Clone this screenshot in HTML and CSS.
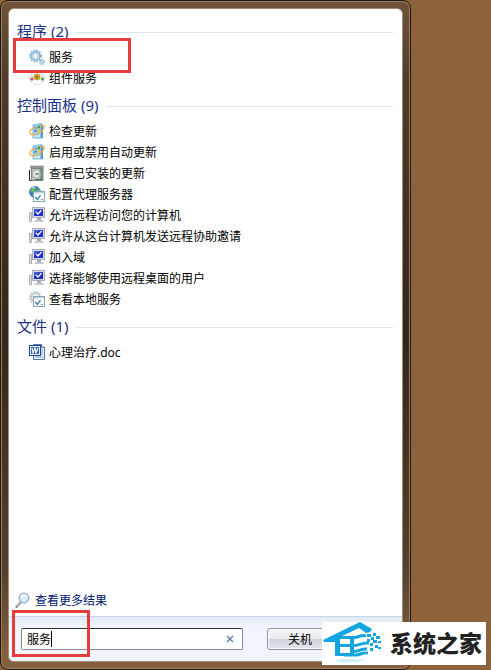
FILE: index.html
```html
<!DOCTYPE html>
<html lang="zh-CN">

<head>
    <meta charset="UTF-8">
    <meta name="viewport" content="width=device-width, initial-scale=1.0">
    <title>服务</title>
    <link rel="stylesheet" href="styles.css">
</head>

<body>
    <!-- Shared icons -->
    <svg class="sprite" aria-hidden="true">
        <symbol id="update" viewBox="0 0 16 16">
            <path d="M4 2l8-1.500V15H4z" fill="#9ad6f5" stroke="#62aedb" stroke-width=".8"/>
            <path d="M12 .5l2 1V15l-2 .5z" fill="#5d9cc8"/>
            <path d="M5.500 4l2-.5v2l-2 .5z" fill="#e8743a"/>
            <path d="M8.500 3l2.500-.5V5l-2.500.5z" fill="#3f9c43"/>
            <path d="M5.500 7l2-.5v2l-2 .5z" fill="#3c6fd0"/>
            <path d="M8.500 6.500L11 6v2.500l-2.500.5z" fill="#f2c32e"/>
            <path d="M11 3c3-1.500 5-.5 4 2s-5 5.500-9 6.500-5.500-1-5-3 2-3 3.500-3.500" fill="none" stroke="#f3a945" stroke-width="1.300"/>
            <path d="M5 12.500h6v1.500H5z" fill="#d9effa"/>
        </symbol>
        <symbol id="computer" viewBox="0 0 16 16">
            <path d="M.5 5.500h2v9h-2z" fill="#dde4de" stroke="#93a696" stroke-width=".8"/>
            <rect x="3.500" y=".5" width="12" height="10" fill="#d5d9e4" stroke="#a9afbd"/>
            <rect x="5" y="2" width="9" height="7" fill="#1d2fc4"/>
            <path d="M5 2h6L5 7z" fill="#4159dc"/>
            <path d="M7 5l2 2 3.500-4" fill="none" stroke="#fff" stroke-width="1.300"/>
            <path d="M8 11h4v2H8z" fill="#a3a9b4"/>
            <path d="M6 13h8l1 2H5z" fill="#c6cad2"/>
        </symbol>
        <symbol id="gear" viewBox="0 0 16 16">
            <circle cx="6.500" cy="7" r="5.500" fill="none" stroke="#8db4cf" stroke-width="2" stroke-dasharray="1.700 1.200"/>
            <circle cx="6.500" cy="7" r="4" fill="#edf6fb" stroke="#8fbbda" stroke-width="1.800"/>
            <circle cx="6.500" cy="7" r="2" fill="#fff" stroke="#a9cbe0" stroke-width=".7"/>
            <circle cx="13" cy="13" r="2.300" fill="none" stroke="#86a9c2" stroke-width="1.300" stroke-dasharray="1 .8"/>
            <circle cx="13" cy="13" r="1.400" fill="#fff" stroke="#8fb5d0"/>
        </symbol>
        <symbol id="checklist" viewBox="0 0 16 16">
            <rect x="4.500" y="5.500" width="11" height="10" fill="#fff" stroke="#8aa5b2"/>
            <path d="M5 6h10v1.500H5z" fill="#c3d5de"/>
            <path d="M6.500 11l2 2.500 3-4.500" fill="none" stroke="#217da1" stroke-width="1.300"/>
            <path d="M12 13.500h2" stroke="#7f9daa"/>
        </symbol>
    </svg>

    <main class="start-menu">
        <div class="panel">
            <div class="results">
                <section class="group">
                    <h2 class="group-title">程序 (2)</h2>
                    <ul class="items">
                        <li><a class="item" href="#"><svg class="icon"><use href="#gear"/></svg>服务</a></li>
                        <li><a class="item" href="#">
                            <svg class="icon" viewBox="0 0 16 16">
                                <ellipse cx="8" cy="8" rx="7.500" ry="6.500" fill="#eceeec" stroke="#d3d6d4"/>
                                <ellipse cx="8" cy="12" rx="5" ry="2" fill="#fff"/>
                                <circle cx="8" cy="7" r="3" fill="#f6cf2b" stroke="#a9851b" stroke-width=".8"/>
                                <path d="M8 5v4M6 7h4" stroke="#7c5010"/>
                                <circle cx="3" cy="9" r="1.500" fill="#ce4862"/>
                                <circle cx="13.500" cy="9" r="1.500" fill="#3da04a"/>
                            </svg>组件服务</a></li>
                    </ul>
                </section>

                <section class="group">
                    <h2 class="group-title">控制面板 (9)</h2>
                    <ul class="items">
                        <li><a class="item" href="#"><svg class="icon"><use href="#update"/></svg>检查更新</a></li>
                        <li><a class="item" href="#"><svg class="icon"><use href="#update"/></svg>启用或禁用自动更新</a></li>
                        <li><a class="item" href="#">
                            <svg class="icon" viewBox="0 0 16 16">
                                <path d="M1 .5h14v3H1z" fill="#b3b3b8"/>
                                <path d="M2 1l1 2 2-2 1 2 2-2 1 2 2-2 1 2 2-2" fill="none" stroke="#666" stroke-width=".7"/>
                                <rect x="2.500" y="3.500" width="11.500" height="12" fill="#b9bfb9" stroke="#7d8285"/>
                                <path d="M.5 5v10.500H2" fill="none" stroke="#222"/>
                                <path d="M11 4h3v11h-3z" fill="#7c9082"/>
                                <circle cx="7.500" cy="9" r="4" fill="#e5e8e3" stroke="#98a199" stroke-width=".8"/>
                                <path d="M7.500 9l3-2v4z" fill="#8bb28f"/>
                                <circle cx="7.500" cy="9" r="1" fill="#59615b"/>
                                <path d="M6 14.500h7" stroke="#437a4b"/>
                            </svg>查看已安装的更新</a></li>
                        <li><a class="item" href="#">
                            <svg class="icon" viewBox="0 0 16 16">
                                <circle cx="6" cy="6" r="5.500" fill="#3c85c7" stroke="#2c659b" stroke-width=".7"/>
                                <path d="M2 3c2-2 4-2 5-1L6 5 3 6 1 5zM8 4l3-1v4H8z" fill="#6abb58"/>
                                <path d="M3 2l3-1" stroke="#d7f0ff"/>
                                <use href="#checklist"/>
                            </svg>配置代理服务器</a></li>
                        <li><a class="item" href="#"><svg class="icon"><use href="#computer"/></svg>允许远程访问您的计算机</a></li>
                        <li><a class="item" href="#"><svg class="icon"><use href="#computer"/></svg>允许从这台计算机发送远程协助邀请</a></li>
                        <li><a class="item" href="#"><svg class="icon"><use href="#computer"/></svg>加入域</a></li>
                        <li><a class="item" href="#"><svg class="icon"><use href="#computer"/></svg>选择能够使用远程桌面的用户</a></li>
                        <li><a class="item" href="#">
                            <svg class="icon" viewBox="0 0 16 16">
                                <circle cx="6.500" cy="6.500" r="5.500" fill="none" stroke="#a9b9c2" stroke-width="1.800" stroke-dasharray="1.700 1.200"/>
                                <circle cx="6.500" cy="6.500" r="4" fill="#f3f6f7" stroke="#bdcdd5" stroke-width="1.500"/>
                                <use href="#checklist"/>
                            </svg>查看本地服务</a></li>
                    </ul>
                </section>

                <section class="group">
                    <h2 class="group-title">文件 (1)</h2>
                    <ul class="items">
                        <li><a class="item" href="#">
                            <svg class="icon" viewBox="0 0 16 16">
                                <path d="M4.500.5h8l3 3v12h-11z" fill="#edf3fc" stroke="#5474ad"/>
                                <path d="M12.500.5v3h3" fill="#fff" stroke="#5474ad"/>
                                <path d="M12 6h2M12 8h2M12 10h2M6 13h8" stroke="#7d9bd0"/>
                                <rect x=".5" y="1.500" width="11" height="10" fill="#e3ecfa" stroke="#24488d"/>
                                <path d="M2 3h8v7H2z" fill="#3a63b0"/>
                                <path d="M3 4l1 5 2-5 1 5 2-5" fill="none" stroke="#fff" stroke-width="1.200"/>
                            </svg>心理治疗.doc</a></li>
                    </ul>
                </section>
            </div>

            <a class="more" href="#">
                <svg class="icon" viewBox="0 0 16 16">
                    <path d="M6 10l-4.500 5" stroke="#8a8a8a" stroke-width="2.200" stroke-linecap="round"/>
                    <path d="M6 10l-4 4.500" stroke="#ddd" stroke-width=".8"/>
                    <circle cx="9" cy="6" r="4.800" fill="#d6edfa" stroke="#98a9b5" stroke-width="1.200"/>
                    <path d="M6 5.500c1-3 4-3 5.500-1.500" fill="none" stroke="#fff" stroke-width="1.500"/>
                </svg>查看更多结果</a>

            <form class="footer" onsubmit="return false">
                <div class="search">
                    <input class="search-input" type="text" value="服务" aria-label="搜索">
                    <span class="caret"></span>
                    <button class="clear" type="button" aria-label="清除">
                        <svg viewBox="0 0 8 8" width="8" height="8"><path d="M1 1l6 6M7 1L1 7" stroke="#5a7ba6" stroke-width="1.300"/></svg>
                    </button>
                </div>
                <button class="shutdown" type="button">关机</button>
            </form>
        </div>

        <!-- Red highlight boxes -->
        <div class="mark mark-result"></div>
        <div class="mark mark-search"></div>
    </main>

    <div class="watermark">
        <svg class="logo" viewBox="0 0 62 43" aria-hidden="true">
            <path d="M1 18L38 0l12 7-2 3-4 1-7-5-19 9v16h12v3H13V20H2z" fill="#12a5e0"/>
            <path d="M18 14h13v3H18zM18 22h11v3H18zM28 14h4v20h-4z" fill="#12a5e0"/>
            <path d="M30 15c6 2 8-3 14-1M30 23c6 2 9-3 17-2M30 29c6 2 9-3 15-2M22 33h9c6 1 9-3 15-2" fill="none" stroke="#12a5e0" stroke-width="3"/>
            <path d="M45 12h4v3h-4zM51 11h3v3h-3zM49 15h3v3h-3zM54 14h4v3h-4zM45 17h3v3h-3zM51 18h4v3h-4zM56 19h3v2h-3zM48 21h3v3h-3zM53 23h3v3h-3zM48 26h3v3h-3zM56 25h3v2h-3z" fill="#12a5e0"/>
            <path d="M13 38c10-2 18 0 32-1-8 5-15 2-21 4-4 0-7-1-11-3z" fill="#d3eef8"/>
        </svg>
        <span class="brand">系统之家</span>
    </div>
</body>

</html>
```
FILE: styles.css
```css
* {
    box-sizing: border-box;
}

body {
    margin: 0;
    min-height: 100vh;
    display: flex;
    background-color: #8b6239;
    font-family: "Noto Sans", "Noto Sans CJK SC", sans-serif;
    font-size: 12px;
    color: #000;
}

.sprite {
    position: absolute;
    width: 0;
    height: 0;
}

/* Glass frame */
.start-menu {
    position: relative;
    display: flex;
    width: 100%;
    max-width: 411px;
    min-height: 100vh;
    padding: 7px;
    border: 1px solid #21160e;
    border-radius: 8px;
    background: linear-gradient(#705239, #4f3b2a 12%, #34261b 50%, #55402d 85%, #84603f 98%);
    box-shadow: inset 0 0 0 1px #9b8065;
}

.panel {
    flex: 1;
    display: flex;
    flex-direction: column;
    border: 1px solid #a08c78;
    border-radius: 6px;
    background-color: #fff;
    overflow: hidden;
}

.results {
    flex: 1;
    padding: 7px 9px 0 8px;
}

.group {
    margin-bottom: 1px;
}

.group-title {
    display: flex;
    align-items: center;
    gap: 8px;
    height: 31px;
    margin: 0;
    padding-bottom: 2px;
    font-size: 15px;
    font-weight: normal;
    color: #1e3287;
}

.group-title::after {
    content: "";
    flex: 1;
    height: 1px;
    margin-top: 4px;
    background-color: #e0e3e8;
}

.items {
    margin: 0;
    padding: 0 0 0 12px;
    list-style: none;
}

.item {
    display: flex;
    align-items: center;
    gap: 4px;
    height: 21px;
    padding-bottom: 2px;
    color: #000;
    text-decoration: none;
}

.icon {
    flex: none;
    width: 16px;
    height: 16px;
}

.more {
    display: flex;
    align-items: center;
    gap: 4px;
    height: 31px;
    padding: 0 0 2px 6px;
    color: #00156e;
    text-decoration: none;
}

/* Search bar */
.footer {
    display: flex;
    align-items: center;
    gap: 24px;
    height: 45px;
    padding: 0 12px;
    border-top: 1px solid #c6d5e7;
    background: linear-gradient(#e1eaf6, #f0f4fb 20%);
}

.search {
    display: flex;
    align-items: center;
    position: relative;
    width: 222px;
    height: 22px;
    border: 1px solid #8a8f96;
    border-top-color: #30343a;
    border-radius: 2px;
    background-color: #fff;
}

.search-input {
    flex: 1;
    min-width: 0;
    padding: 0 0 0 5px;
    border: 0;
    outline: 0;
    background: none;
    font: inherit;
}

.caret {
    position: absolute;
    left: 29px;
    width: 1px;
    height: 16px;
    background-color: #000;
}

.clear {
    display: flex;
    padding: 8px;
    border: 0;
    background: none;
}

.shutdown {
    width: 66px;
    height: 22px;
    padding: 0;
    border: 1px solid #8d949e;
    border-radius: 3px;
    background: linear-gradient(#f6f7f9, #e8eaee 48%, #cfd3da 52%, #e3e6eb);
    box-shadow: inset 0 0 0 1px #fafbfc;
    font: inherit;
}

.mark {
    position: absolute;
    border: 3px solid #e53c3c;
    pointer-events: none;
}

.mark-result {
    top: 37px;
    left: 12px;
    width: 118px;
    height: 35px;
}

.mark-search {
    bottom: 12px;
    left: 11px;
    width: 78px;
    height: 47px;
}

.watermark {
    position: fixed;
    right: 5px;
    bottom: 5px;
    display: flex;
    align-items: center;
    width: 164px;
    height: 43px;
    background-color: #fff;
}

.logo {
    width: 62px;
    height: 43px;
}

.brand {
    margin-left: 6px;
    font-size: 23px;
    font-weight: 900;
    line-height: 43px;
    color: #222;
    white-space: nowrap;
}
```
